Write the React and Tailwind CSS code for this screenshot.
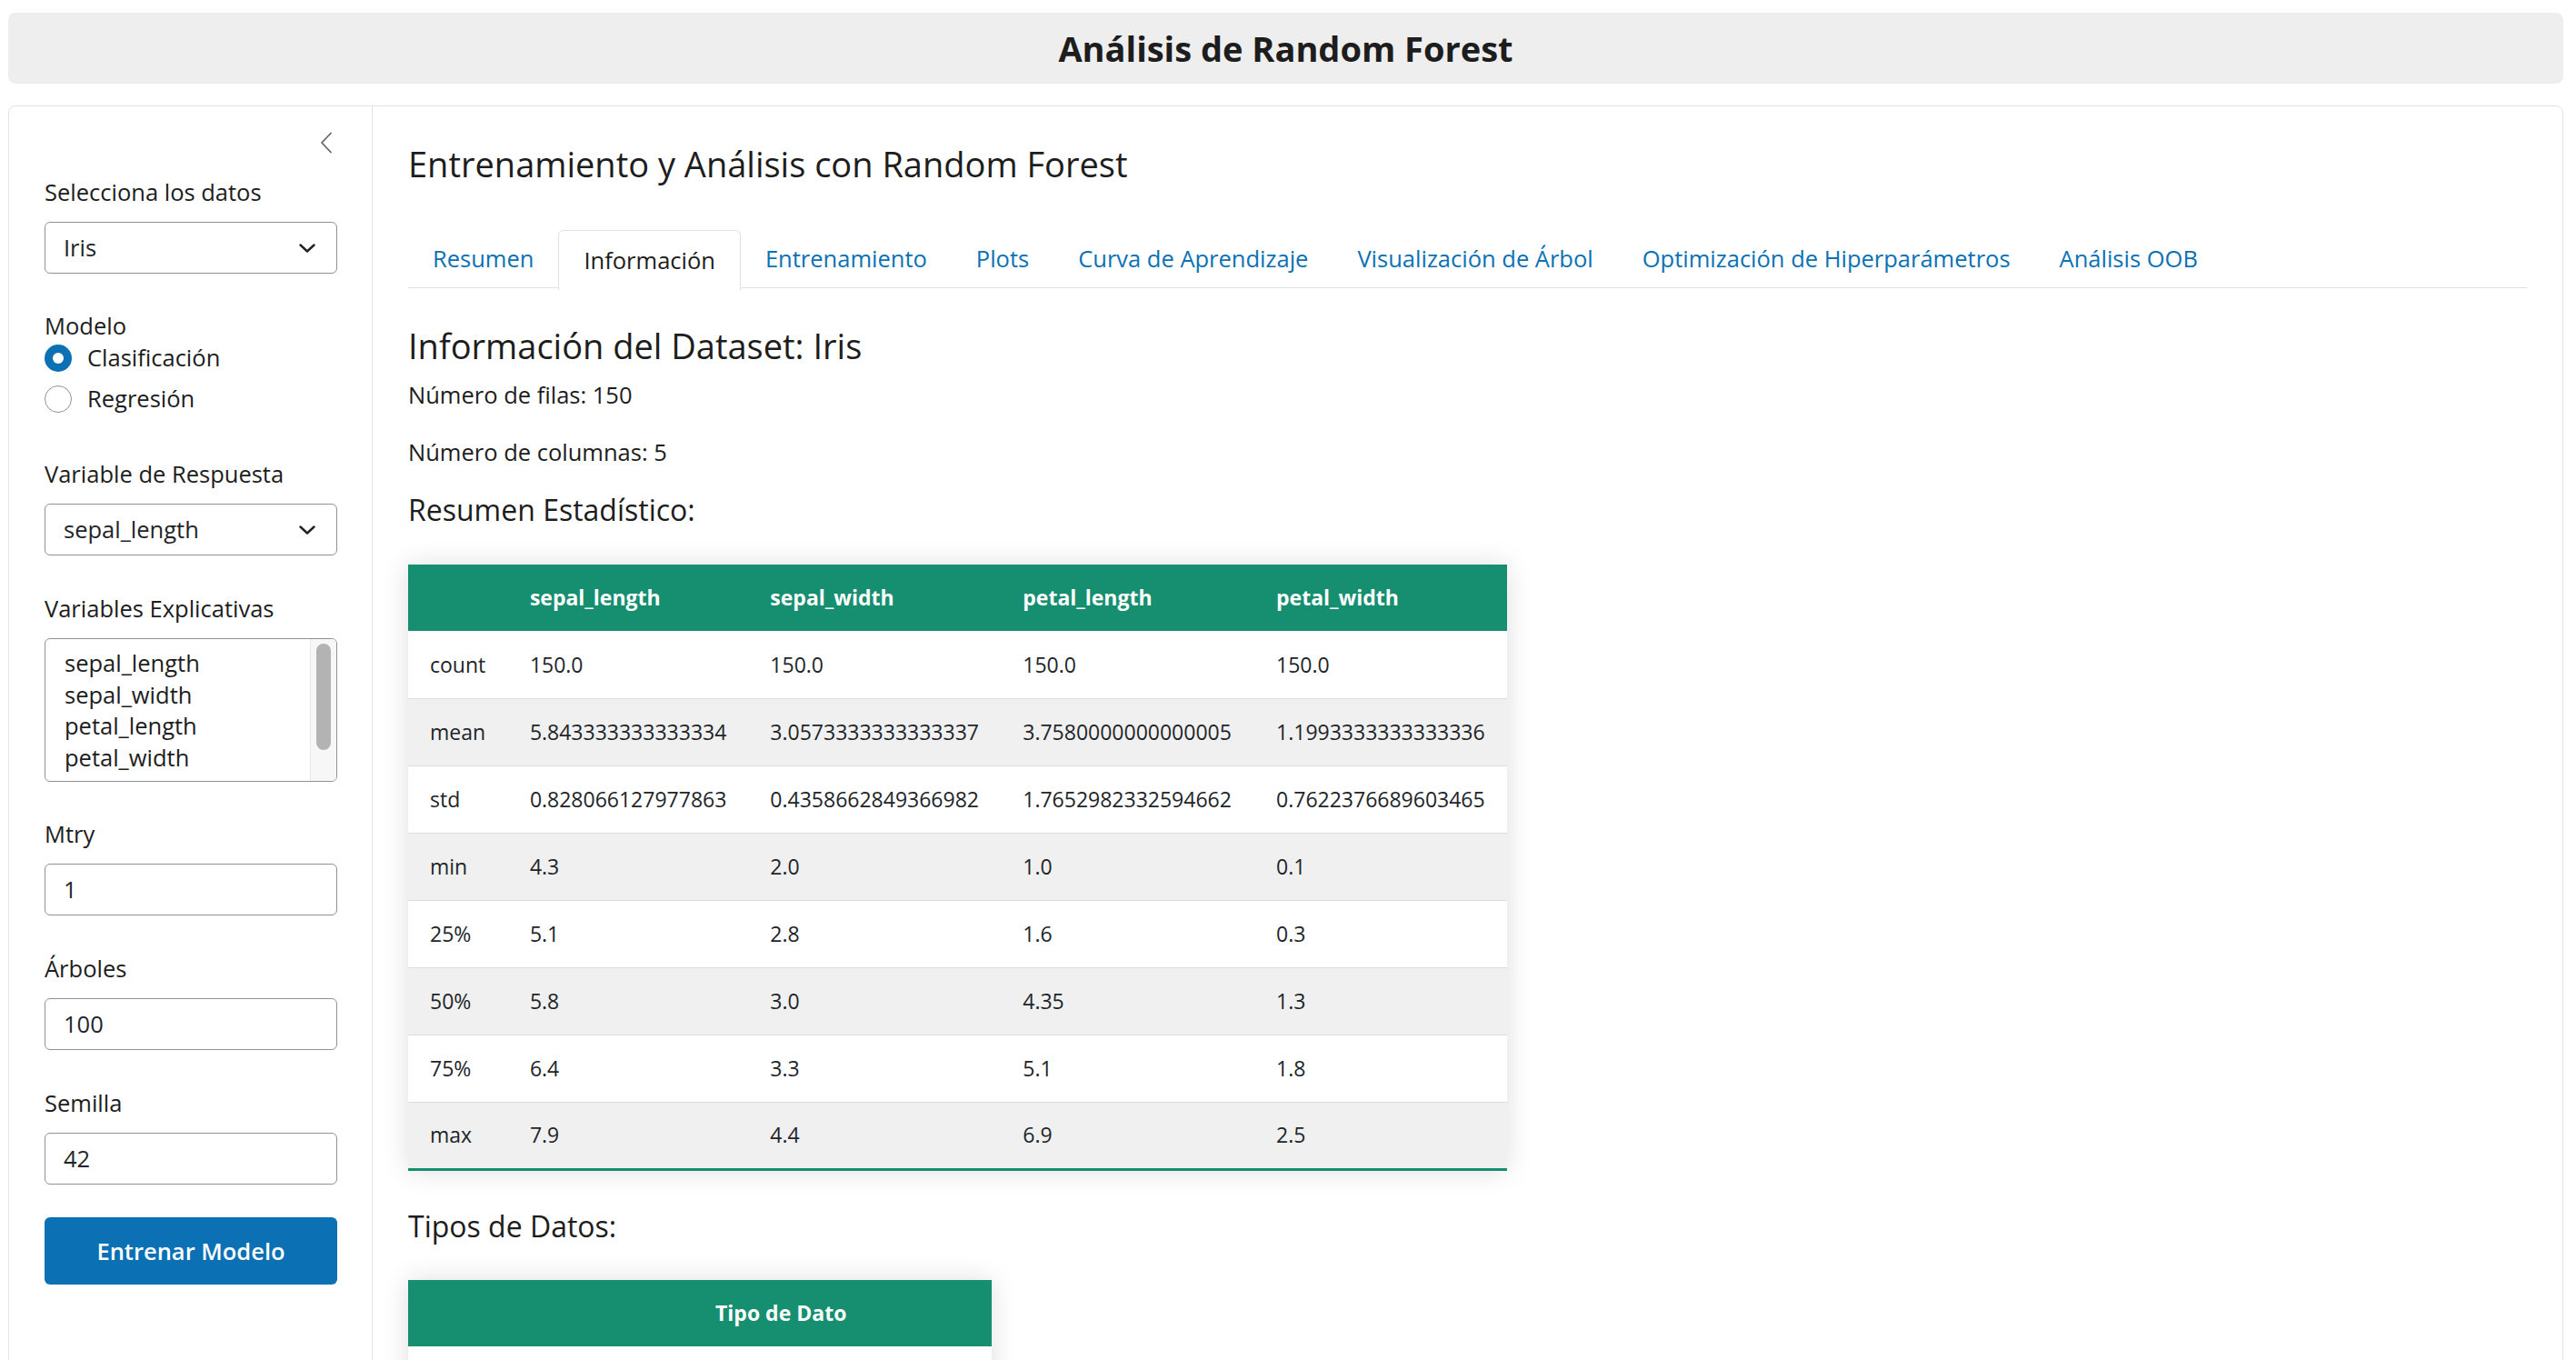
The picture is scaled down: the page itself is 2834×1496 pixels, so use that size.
import React from 'react';

const stats = [
  ['count', '150.0', '150.0', '150.0', '150.0'],
  ['mean', '5.843333333333334', '3.0573333333333337', '3.7580000000000005', '1.1993333333333336'],
  ['std', '0.828066127977863', '0.4358662849366982', '1.7652982332594662', '0.7622376689603465'],
  ['min', '4.3', '2.0', '1.0', '0.1'],
  ['25%', '5.1', '2.8', '1.6', '0.3'],
  ['50%', '5.8', '3.0', '4.35', '1.3'],
  ['75%', '6.4', '3.3', '5.1', '1.8'],
  ['max', '7.9', '4.4', '6.9', '2.5'],
];

const tabs = [
  'Resumen',
  'Información',
  'Entrenamiento',
  'Plots',
  'Curva de Aprendizaje',
  'Visualización de Árbol',
  'Optimización de Hiperparámetros',
  'Análisis OOB',
];

const ChevronDown = () => (
  <svg width="18" height="10" viewBox="0 0 18 10" fill="none">
    <path d="M1.5 1.5 L9 8.5 L16.5 1.5" stroke="#222" strokeWidth="2.4" strokeLinecap="round" strokeLinejoin="round" />
  </svg>
);

const SelectBox = ({ value }) => (
  <div className="h-[57px] w-[322px] border-[1.5px] border-[#8d9297] rounded-[6px] flex items-center justify-between pl-[20px] pr-[23px] bg-white">
    <span className="text-[25.5px] text-[#212529]">{value}</span>
    <ChevronDown />
  </div>
);

const TextInput = ({ value }) => (
  <div className="h-[57px] w-[322px] border-[1.5px] border-[#8d9297] rounded-[6px] flex items-center pl-[20px] bg-white">
    <span className="text-[25.5px] text-[#212529]">{value}</span>
  </div>
);

const Field = ({ label, children, className = '' }) => (
  <div className={`flex flex-col gap-[13px] ${className}`}>
    <label className="text-[25.5px] leading-[40px] text-[#1d1d1d]">{label}</label>
    {children}
  </div>
);

const Radio = ({ checked, label }) => (
  <div className="h-[45px] flex items-center gap-[17px]">
    {checked ? (
      <span className="w-[30px] h-[30px] rounded-full bg-[#0b71b4] flex items-center justify-center">
        <span className="w-[12px] h-[12px] rounded-full bg-white" />
      </span>
    ) : (
      <span className="w-[30px] h-[30px] rounded-full border-[1.5px] border-[#8d9297] bg-white" />
    )}
    <span className="text-[25.5px] text-[#1d1d1d]">{label}</span>
  </div>
);

const Sidebar = () => (
  <aside className="w-[400px] shrink-0 border-r border-[#e3e3e3] pl-[39px] pr-[38px] pt-[28px]">
    {/* collapse toggle */}
    <div className="flex justify-end pr-[5px] h-[24px]">
      <svg width="14" height="24" viewBox="0 0 14 24" fill="none">
        <path d="M12 1.5 L2 12 L12 22.5" stroke="#666" strokeWidth="1.8" strokeLinecap="round" strokeLinejoin="round" />
      </svg>
    </div>

    <Field label="Selecciona los datos" className="mt-[22px]">
      <SelectBox value="Iris" />
    </Field>

    <div className="mt-[37px]">
      <div className="text-[25.5px] leading-[40px] text-[#1d1d1d]">Modelo</div>
      <div className="-mt-[7px]">
        <Radio checked label="Clasificación" />
        <Radio label="Regresión" />
      </div>
    </div>

    <Field label="Variable de Respuesta" className="mt-[40px]">
      <SelectBox value="sepal_length" />
    </Field>

    <Field label="Variables Explicativas" className="mt-[38px]">
      <div className="h-[158px] w-[322px] border-[1.5px] border-[#8d9297] rounded-[6px] flex overflow-hidden bg-white">
        <div className="flex-1 pl-[21px] pt-[9px] text-[25.5px] leading-[34.5px] text-[#1d1d1d]">
          <div>sepal_length</div>
          <div>sepal_width</div>
          <div>petal_length</div>
          <div>petal_width</div>
          <div>species</div>
        </div>
        <div className="w-[29px] bg-[#f7f7f7] border-l border-[#e6e6e6] pt-[5px] flex justify-center">
          <div className="w-[16px] h-[117px] rounded-full bg-[#b3b3b3]" />
        </div>
      </div>
    </Field>

    <Field label="Mtry" className="mt-[37px]">
      <TextInput value="1" />
    </Field>

    <Field label="Árboles" className="mt-[38px]">
      <TextInput value="100" />
    </Field>

    <Field label="Semilla" className="mt-[38px]">
      <TextInput value="42" />
    </Field>

    <button className="mt-[36px] w-[322px] h-[74px] rounded-[6px] bg-[#0b71b4] text-white text-[25.5px] font-semibold">
      Entrenar Modelo
    </button>
  </aside>
);

const StatsTable = () => (
  <div className="w-[1209px] shadow-[0_0_28px_rgba(0,0,0,0.13)]">
    <table className="w-full border-collapse text-[23px] text-[#212529]">
      <colgroup>
        <col className="w-[110px]" />
        <col className="w-[264px]" />
        <col className="w-[278px]" />
        <col className="w-[279px]" />
        <col className="w-[278px]" />
      </colgroup>
      <thead>
        <tr className="h-[73px] bg-[#168e70] text-white text-left">
          <th className="px-[24px] font-bold"></th>
          <th className="px-[24px] font-bold">sepal_length</th>
          <th className="px-[24px] font-bold">sepal_width</th>
          <th className="px-[24px] font-bold">petal_length</th>
          <th className="px-[24px] font-bold">petal_width</th>
        </tr>
      </thead>
      <tbody>
        {stats.map((row, i) => (
          <tr
            key={row[0]}
            className={`h-[74px] ${i % 2 === 1 ? 'bg-[#f0f0f0]' : 'bg-white'} ${
              i === stats.length - 1 ? 'border-b-[3px] border-[#168e70]' : 'border-b border-[#dddddd]'
            }`}
          >
            {row.map((cell, j) => (
              <td key={j} className="px-[24px]">{cell}</td>
            ))}
          </tr>
        ))}
      </tbody>
    </table>
  </div>
);

export default function App() {
  return (
    <div
      className="w-[2834px] h-[1496px] overflow-hidden bg-white text-[#1d1d1d]"
      style={{ fontFamily: '"Open Sans", "Noto Sans", sans-serif' }}
    >
      {/* Title bar */}
      <div className="pt-[14px] pl-[9px] pr-[14px]">
        <div className="h-[78px] bg-[#eeeeee] rounded-[8px] flex items-center justify-center">
          <h1 className="text-[38px] font-bold text-[#1d1d1d]">Análisis de Random Forest</h1>
        </div>
      </div>

      {/* Layout card */}
      <div className="mt-[24px] ml-[9px] mr-[14px] h-[1400px] border border-[#e3e3e3] rounded-[8px] flex">
        <Sidebar />

        <main className="flex-1 px-[39px] pt-[40px]">
          <h2 className="text-[38px] leading-[46px] text-[#1d1d1d]">
            Entrenamiento y Análisis con Random Forest
          </h2>

          {/* Tabs */}
          <div className="mt-[50px] flex border-b-[1.5px] border-[#dee2e6] h-[64px]">
            {tabs.map((t) => (
              <div
                key={t}
                className={`px-[27px] flex items-center text-[25.5px] ${
                  t === 'Información'
                    ? 'text-[#1d1d1d] bg-white border-[1.5px] border-b-0 border-[#dee2e6] rounded-t-[6px] -mb-[1.5px] h-[65.5px]'
                    : 'text-[#0b71b4]'
                }`}
              >
                {t}
              </div>
            ))}
          </div>

          <h3 className="mt-[40px] text-[38px] leading-[46px] text-[#1d1d1d]">Información del Dataset: Iris</h3>
          <p className="mt-[11px] text-[25.5px] leading-[40px]">Número de filas: 150</p>
          <p className="mt-[23px] text-[25.5px] leading-[40px]">Número de columnas: 5</p>
          <h4 className="mt-[23px] text-[32px] leading-[42px]">Resumen Estadístico:</h4>

          <div className="mt-[39px]">
            <StatsTable />
          </div>

          <h4 className="mt-[40px] text-[32px] leading-[42px]">Tipos de Datos:</h4>

          <div className="mt-[38px] w-[642px] shadow-[0_0_28px_rgba(0,0,0,0.13)]">
            <table className="w-full border-collapse text-[23px] text-[#212529]">
              <colgroup>
                <col className="w-[314px]" />
                <col />
              </colgroup>
              <thead>
                <tr className="h-[73px] bg-[#168e70] text-white text-left">
                  <th className="px-[24px] font-bold"></th>
                  <th className="px-[24px] font-bold">Tipo de Dato</th>
                </tr>
              </thead>
              <tbody>
                {/* first dtype row falls below the fold */}
                <tr className="h-[74px] bg-white border-b border-[#dddddd]">
                  <td className="px-[24px]"></td>
                  <td className="px-[24px]"></td>
                </tr>
              </tbody>
            </table>
          </div>
        </main>
      </div>
    </div>
  );
}
